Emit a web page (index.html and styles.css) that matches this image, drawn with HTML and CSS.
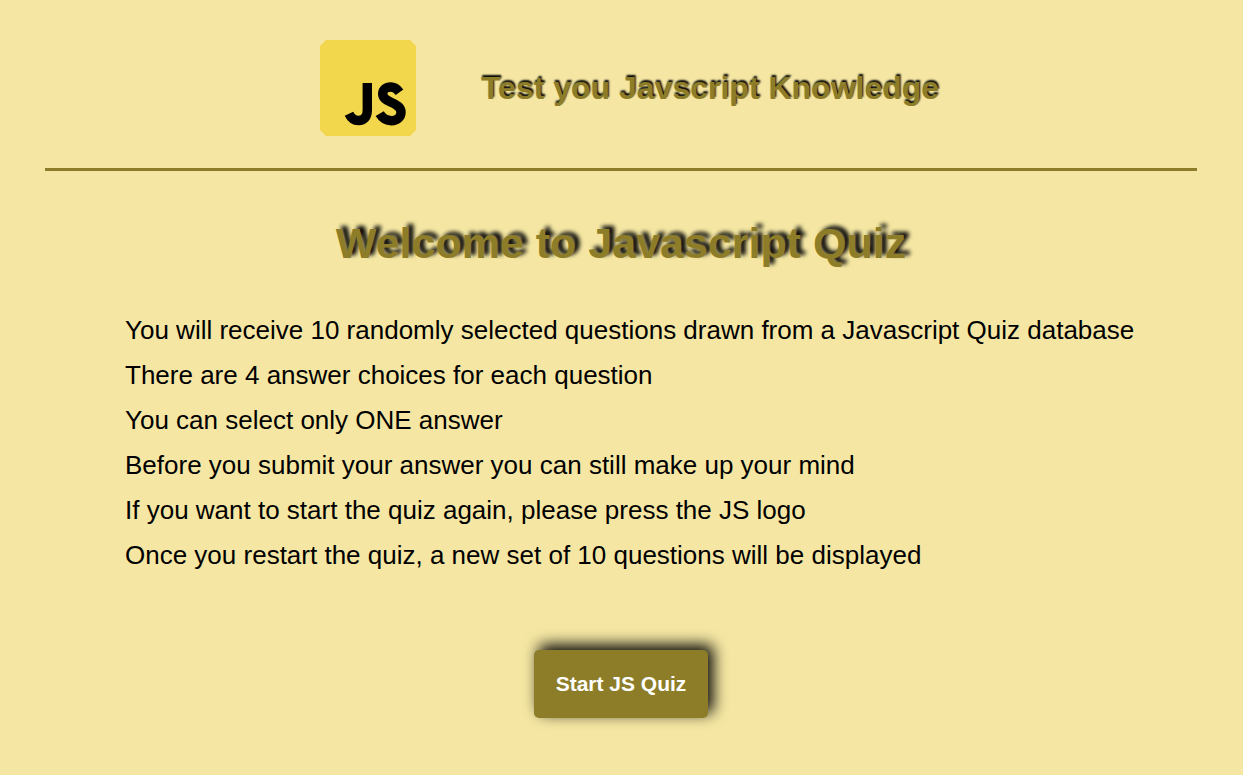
FILE: index.html
```
<!DOCTYPE html>
<html lang="en">
<head>
  <meta charset="utf-8">
  <meta name="viewport" content="width=device-width, initial-scale=1">
  <title>Javascript Quiz</title>
  <link rel="stylesheet" href="styles.css">
</head>
<body>
  <header class="header">
    <a class="logo" href="index.html" aria-label="Restart quiz">
      <svg viewBox="0 0 96 96" aria-hidden="true">
        <path fill="#f2d64b" d="M6 0H90L96 6V90L90 96H6L0 90V6Z"/>
        <g fill="none" stroke="#000" stroke-width="9.400">
          <path d="M47.300 43V70C47.300 77 44 80.500 38.500 80.500C34 80.500 31 78 29 73.700"/>
          <path d="M79.500 52.200C77 48.700 74.200 47 70.700 47C66 47 62.700 49.700 62.700 53.800C62.700 58.200 66 60 70.500 62C77 64.800 81 67.300 81 72.300C81 77.500 76.700 80.700 71.500 80.700C66 80.700 62.300 78.200 59.700 73.700"/>
        </g>
      </svg>
    </a>
    <h1 class="title">Test you Javscript Knowledge</h1>
  </header>
  <main class="main">
    <h2 class="welcome">Welcome to Javascript Quiz</h2>
    <ul class="rules">
      <li>You will receive 10 randomly selected questions drawn from a Javascript Quiz database</li>
      <li>There are 4 answer choices for each question</li>
      <li>You can select only ONE answer</li>
      <li>Before you submit your answer you can still make up your mind</li>
      <li>If you want to start the quiz again, please press the JS logo</li>
      <li>Once you restart the quiz, a new set of 10 questions will be displayed</li>
    </ul>
    <button class="start" type="button">Start JS Quiz</button>
  </main>
</body>
</html>
```
FILE: styles.css
```
* {
  box-sizing: border-box;
  margin: 0;
  padding: 0;
}

body {
  padding: 8px 46px 0 45px;
  background: #f5e7a3;
  color: #000;
  font-family: "Liberation Sans", Arial, sans-serif;
}

.header {
  display: flex;
  align-items: center;
  justify-content: center;
  gap: 65px;
  padding: 32px 0 32px 17px;
  border-bottom: 3px solid #8d7d28;
}

.logo {
  flex: none;
  width: 96px;
  height: 96px;
}

.logo svg {
  display: block;
  width: 100%;
  height: 100%;
}

.title {
  color: #8d7d28;
  font-size: 32px;
  line-height: 36px;
  text-shadow: 1px -2px 2px #000;
}

.main {
  display: flex;
  flex-direction: column;
  align-items: center;
  padding: 46px 0 56px;
}

.welcome {
  color: #8d7d28;
  font-size: 43px;
  line-height: 52px;
  text-align: center;
  text-shadow: 5px -3px 4px #000;
}

.rules {
  align-self: stretch;
  padding: 39px 0 72px 80px;
  font-size: 26px;
  line-height: 45px;
  list-style: none;
}

.start {
  padding: 22px;
  border: 0;
  border-radius: 5px;
  background: #8d7d28;
  box-shadow: 5px -5px 15px #000;
  color: #fff;
  font: bold 21px/24px "Liberation Sans", Arial, sans-serif;
  cursor: pointer;
}
```
